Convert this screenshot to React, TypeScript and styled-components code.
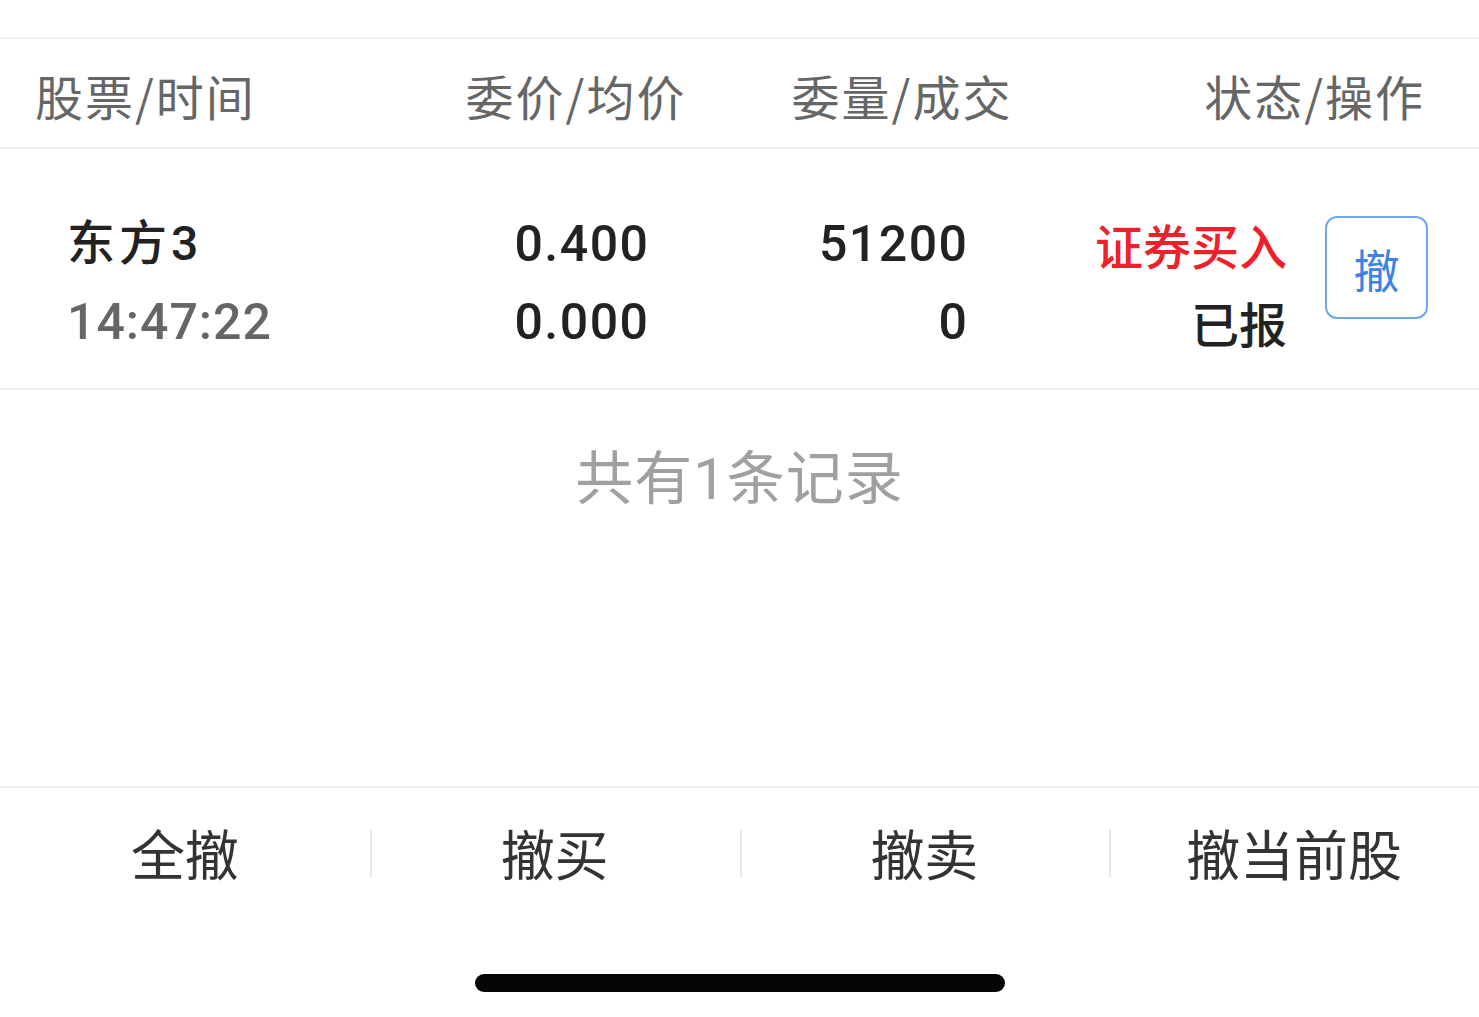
import styled, { createGlobalStyle } from "styled-components";

const GlobalStyle = createGlobalStyle`
  html, body {
    margin: 0;
    padding: 0;
    background: #ffffff;
  }
  body {
    font-family: Roboto, "Noto Sans CJK SC", sans-serif;
  }
`;

const actions = ["全撤", "撤买", "撤卖", "撤当前股"];

const App = () => {
  return (
    <Page>
      <GlobalStyle />
      <TopSpace />

      <HeaderRow>
        <HeadCell $width={400}>股票/时间</HeadCell>
        <HeadCell $width={282} $align="center">委价/均价</HeadCell>
        <HeadCell $width={370} $align="center">委量/成交</HeadCell>
        <HeadCell $width={338} $align="right">状态/操作</HeadCell>
      </HeaderRow>

      <OrderRow>
        <Cell $width={381}>
          <Name>东方3</Name>
          <Time>14:47:22</Time>
        </Cell>
        <Cell $width={200} $align="right">
          <Value>0.400</Value>
          <Value>0.000</Value>
        </Cell>
        <Cell $width={319} $align="right">
          <Value>51200</Value>
          <Value>0</Value>
        </Cell>
        <StatusCell>
          <Direction>证券买入</Direction>
          <Status>已报</Status>
        </StatusCell>
        <CancelButton>撤</CancelButton>
      </OrderRow>

      <Summary>共有1条记录</Summary>

      <ActionBar>
        {actions.map((label, i) => (
          <Action key={label} $first={i === 0}>
            {label}
          </Action>
        ))}
      </ActionBar>

      <HomeArea>
        <HomeIndicator />
      </HomeArea>
    </Page>
  );
};

const Page = styled.div`
  width: 1479px;
  height: 1017px;
  overflow: hidden;
  background: #ffffff;
  display: flex;
  flex-direction: column;
`;

const TopSpace = styled.div`
  height: 37px;
  border-bottom: 2px solid #f1f1f1;
`;

const HeaderRow = styled.div`
  display: flex;
  align-items: center;
  height: 110px;
  padding: 3px 54px 0 35px;
  box-sizing: border-box;
  border-bottom: 2px solid #efefef;
`;

const HeadCell = styled.div<{ $width: number; $align?: string }>`
  width: ${(p) => p.$width}px;
  text-align: ${(p) => p.$align || "left"};
  font-family: "Noto Sans CJK SC", sans-serif;
  font-size: 48px;
  letter-spacing: 2px;
  color: #666666;
  white-space: nowrap;
`;

const OrderRow = styled.div`
  display: flex;
  align-items: flex-start;
  height: 241px;
  padding: 66px 51px 0 67px;
  box-sizing: border-box;
  border-bottom: 2px solid #f1f1f1;
`;

const Cell = styled.div<{ $width: number; $align?: string }>`
  width: ${(p) => p.$width}px;
  display: flex;
  flex-direction: column;
  gap: 20px;
  align-items: ${(p) => (p.$align === "right" ? "flex-end" : "flex-start")};
`;

const Line = styled.div`
  height: 58px;
  line-height: 58px;
  white-space: nowrap;
`;

const Name = styled(Line)`
  font-family: Roboto, "Noto Sans CJK SC", sans-serif;
  font-size: 48px;
  font-weight: 500;
  letter-spacing: 4px;
  color: #222222;
`;

const Time = styled(Line)`
  font-size: 50px;
  font-weight: 500;
  letter-spacing: 1px;
  color: #666666;
`;

const Value = styled(Line)`
  font-size: 50px;
  font-weight: 500;
  letter-spacing: 1.5px;
  margin-right: -1.5px;
  color: #222222;
`;

const StatusCell = styled.div`
  flex: 1;
  display: flex;
  flex-direction: column;
  align-items: flex-end;
  gap: 20px;
`;

const Direction = styled(Line)`
  font-family: "Noto Sans CJK SC", sans-serif;
  font-size: 48px;
  font-weight: 500;
  color: #f0202a;
`;

const Status = styled(Line)`
  font-family: "Noto Sans CJK SC", sans-serif;
  font-size: 48px;
  font-weight: 500;
  color: #222222;
`;

const CancelButton = styled.div`
  width: 103px;
  height: 103px;
  margin: 1px 0 0 38px;
  box-sizing: border-box;
  border: 2px solid #72a6ec;
  border-radius: 12px;
  display: flex;
  align-items: center;
  justify-content: center;
  font-family: "Noto Sans CJK SC", sans-serif;
  font-size: 46px;
  color: #3d83e3;
`;

const Summary = styled.div`
  height: 398px;
  padding-top: 57px;
  box-sizing: border-box;
  text-align: center;
  font-family: Roboto, "Noto Sans CJK SC", sans-serif;
  font-size: 58px;
  line-height: 64px;
  letter-spacing: 1px;
  color: #a0a0a0;
  border-bottom: 2px solid #f2f2f2;
`;

const ActionBar = styled.div`
  display: grid;
  grid-template-columns: repeat(4, 1fr);
  align-items: center;
  padding-top: 37px;
`;

const Action = styled.div<{ $first?: boolean }>`
  position: relative;
  height: 56px;
  line-height: 56px;
  text-align: center;
  font-family: "Noto Sans CJK SC", sans-serif;
  font-size: 54px;
  color: #333333;

  &::before {
    content: "";
    display: ${(p) => (p.$first ? "none" : "block")};
    position: absolute;
    left: 0;
    top: 4px;
    width: 2px;
    height: 48px;
    background: #e6e6e6;
  }
`;

const HomeArea = styled.div`
  flex: 1;
  display: flex;
  justify-content: center;
  padding-top: 93px;
`;

const HomeIndicator = styled.div`
  width: 530px;
  height: 18px;
  border-radius: 9px;
  background: #050505;
`;

export default App;
